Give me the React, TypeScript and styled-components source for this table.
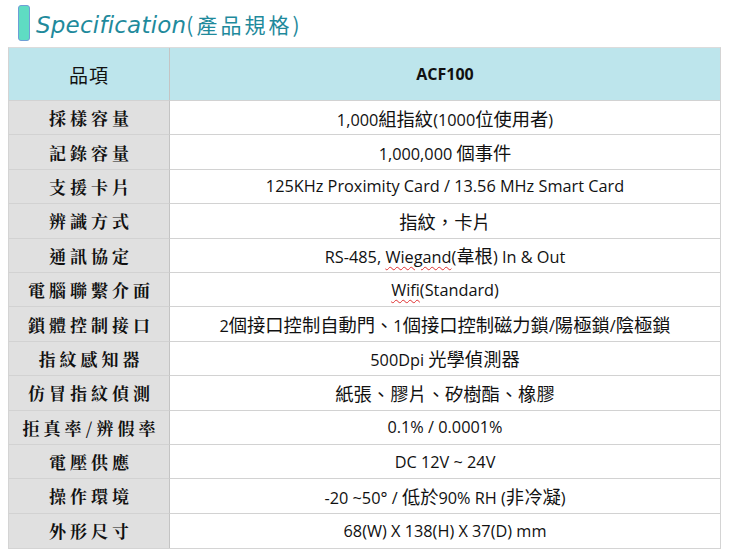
import React from "react";
import styled, { createGlobalStyle } from "styled-components";

const Global = createGlobalStyle`
  html, body { margin: 0; padding: 0; background: #ffffff; }
  body { font-family: "Open Sans", "Noto Sans CJK TC", sans-serif; }
`;

const Page = styled.div`
  width: 730px;
  height: 557px;
  padding: 4px 9px 0 8px;
  box-sizing: border-box;
  display: flex;
  flex-direction: column;
`;

const TitleBar = styled.div`
  display: flex;
  align-items: center;
  gap: 6px;
  height: 37px;
  padding-left: 10px;
  margin-bottom: 6px;
`;

const Marker = styled.div`
  width: 12px;
  height: 36px;
  box-sizing: border-box;
  background: #5fdcc3;
  border: 1px solid #6f9fd6;
  border-radius: 3px;
`;

const Title = styled.h1`
  margin: 2px 0 0;
  font-family: "DejaVu Sans", "Noto Sans CJK TC", sans-serif;
  font-style: italic;
  font-weight: normal;
  font-size: 23px;
  color: #1f8a9c;
  letter-spacing: 0.2px;
`;

const TitleCJK = styled.span`
  font-family: "Noto Sans CJK TC", sans-serif;
  font-style: normal;
  font-size: 21px;
  letter-spacing: 3px;
`;

const Table = styled.div`
  display: grid;
  grid-template-columns: 161px 1fr;
  grid-template-rows: 53px repeat(13, 34.4px);
  border: 1px solid #d4d4d4;
  border-top-color: #dcdcdc;
  width: 713px;
  box-sizing: border-box;
`;

const Cell = styled.div<{ $head?: boolean; $label?: boolean; $last?: boolean }>`
  display: flex;
  align-items: center;
  justify-content: center;
  background: ${(p) => (p.$head ? "#bde5ec" : p.$label ? "#e0e0e0" : "#ffffff")};
  border-bottom: ${(p) => (p.$last ? "none" : "1px solid #d2d2d2")};
  border-right: ${(p) => (p.$label ? "1px solid #c4c4c4" : "none")};
  box-sizing: border-box;
  color: #111;
`;

const HeadLabel = styled.span`
  font-family: "Noto Sans CJK TC", sans-serif;
  font-size: 19px;
  letter-spacing: 1px;
`;

const HeadValue = styled.span`
  font-family: "Open Sans", sans-serif;
  font-weight: 700;
  font-size: 16px;
`;

const Label = styled.span`
  font-family: "Noto Serif CJK TC", "Noto Sans CJK TC", serif;
  font-weight: 700;
  font-size: 17px;
  letter-spacing: 4px;
  padding-left: 4px;
`;

const Value = styled.span`
  font-family: "Open Sans", "Noto Sans CJK TC", sans-serif;
  font-size: 16.3px;
  letter-spacing: 0;
  white-space: nowrap;
`;

const Han = styled.span`
  font-family: "Noto Sans CJK TC", sans-serif;
  font-size: 18.3px;
  letter-spacing: 0;
`;

const Spell = styled.span`
  text-decoration: underline wavy #e03030;
  text-decoration-thickness: 1px;
  text-underline-offset: 3px;
`;

const hanRe = /([\u3000-\u303f\u4e00-\u9fff\uff00-\uffef]+)/;

function Mixed({ text }: { text: string }) {
  const parts = text.split(hanRe);
  return (
    <>
      {parts.map((p, i) =>
        p === "" ? null : hanRe.test(p) ? <Han key={i}>{p}</Han> : <React.Fragment key={i}>{p}</React.Fragment>
      )}
    </>
  );
}

const rows: [string, React.ReactNode][] = [
  ["採樣容量", <Mixed text="1,000組指紋(1000位使用者)" />],
  ["記錄容量", <Mixed text="1,000,000 個事件" />],
  ["支援卡片", "125KHz Proximity Card / 13.56 MHz Smart Card"],
  ["辨識方式", <Mixed text="指紋，卡片" />],
  ["通訊協定", <>RS-485, <Spell>Wiegand</Spell>(<Han>韋根</Han>) In &amp; Out</>],
  ["電腦聯繫介面", <><Spell>Wifi</Spell>(Standard)</>],
  ["鎖體控制接口", <Mixed text="2個接口控制自動門、1個接口控制磁力鎖/陽極鎖/陰極鎖" />],
  ["指紋感知器", <Mixed text="500Dpi 光學偵測器" />],
  ["仿冒指紋偵測", <Mixed text="紙張、膠片、矽樹酯、橡膠" />],
  ["拒真率/辨假率", "0.1% / 0.0001%"],
  ["電壓供應", "DC 12V ~ 24V"],
  ["操作環境", <Mixed text="-20 ~50° / 低於90% RH (非冷凝)" />],
  ["外形尺寸", "68(W) X 138(H) X 37(D) mm"],
];

export default function App() {
  return (
    <>
      <Global />
      <Page>
        <TitleBar>
          <Marker />
          <Title>
            Specification<TitleCJK>(產品規格)</TitleCJK>
          </Title>
        </TitleBar>
        <Table>
          <Cell $head $label>
            <HeadLabel>品項</HeadLabel>
          </Cell>
          <Cell $head>
            <HeadValue>ACF100</HeadValue>
          </Cell>
          {rows.map(([k, v], i) => (
            <React.Fragment key={k}>
              <Cell $label $last={i === rows.length - 1}>
                <Label>{k}</Label>
              </Cell>
              <Cell $last={i === rows.length - 1}>
                <Value>{v}</Value>
              </Cell>
            </React.Fragment>
          ))}
        </Table>
      </Page>
    </>
  );
}
